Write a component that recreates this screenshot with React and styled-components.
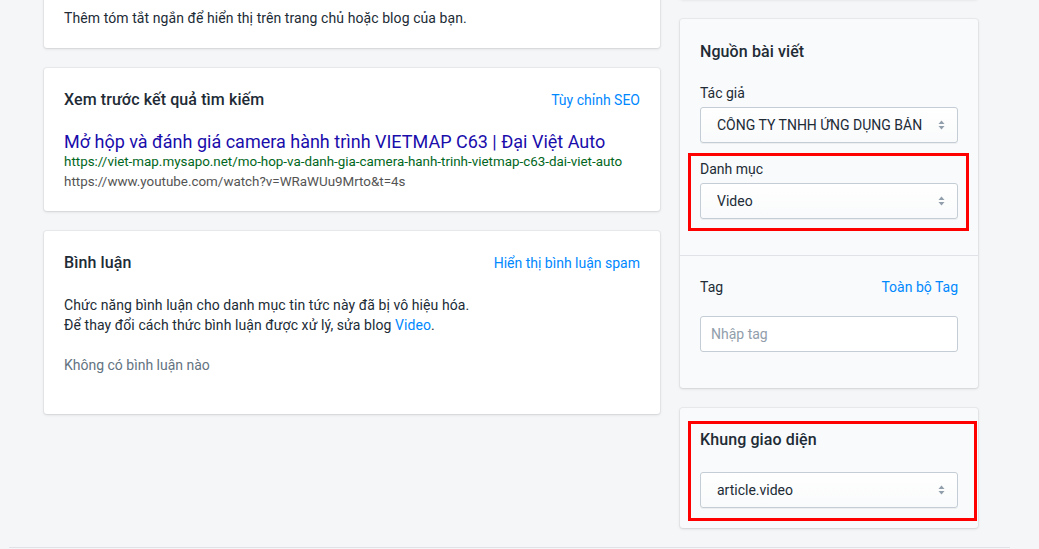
import React from "react";
import styled, { createGlobalStyle } from "styled-components";

const Global = createGlobalStyle`
  html, body { margin: 0; padding: 0; }
  body {
    background: #f4f6f8;
    font-family: Roboto, "Noto Sans", Arial, sans-serif;
    font-size: 14px;
    line-height: 20px;
    color: #212b36;
    overflow: hidden;
  }
  * { box-sizing: border-box; }
`;

const Page = styled.div`
  width: 1039px;
  height: 549px;
  overflow: hidden;
  display: flex;
  flex-direction: column;
`;

const Layout = styled.div`
  display: flex;
  align-items: flex-start;
  gap: 20px;
  margin-top: -20px;
  padding-left: 44px;
`;

const Column = styled.div`
  width: ${(p) => p.$width}px;
  display: flex;
  flex-direction: column;
  gap: 20px;
`;

const Card = styled.div`
  position: relative;
  background: ${(p) => (p.$tinted ? "#f9fafb" : "#ffffff")};
  border-radius: 3px;
  box-shadow: 0 0 0 1px rgba(63, 63, 68, 0.05), 0 1px 3px 0 rgba(63, 63, 68, 0.15);
  ${(p) => (p.$height ? `height: ${p.$height}px;` : "")}
`;

const Section = styled.div`
  padding: ${(p) => p.$pad || "20px"};
  & + & { border-top: 1px solid #dfe3e8; }
`;

const Header = styled.div`
  display: flex;
  justify-content: space-between;
  align-items: center;
  margin-bottom: ${(p) => (p.$mb != null ? p.$mb : 20)}px;
`;

const Title = styled.h2`
  margin: 0;
  font-size: 16px;
  line-height: 24px;
  font-weight: 500;
  letter-spacing: 0.1px;
  color: #212b36;
`;

const Link = styled.a`
  color: #0088ff;
  text-decoration: none;
  font-size: 14px;
  line-height: 20px;
  cursor: pointer;
`;

const Text = styled.p`
  margin: 0;
  color: ${(p) => p.$color || "#212b36"};
  font-size: 14px;
  line-height: 20px;
  letter-spacing: 0.08px;
`;

const SerpTitle = styled.a`
  display: block;
  color: #1a0dab;
  font-size: 18px;
  line-height: 20px;
  text-decoration: none;
`;

const SerpUrl = styled.div`
  color: ${(p) => p.$color};
  font-size: 13.4px;
  line-height: 20px;
`;

const Empty = styled.p`
  margin: 20px 0 19px;
  color: #637381;
  font-size: 14px;
  line-height: 20px;
`;

const FormGroup = styled.div`
  position: relative;
  margin-bottom: 16px;
`;

const Label = styled.label`
  display: block;
  font-size: 14px;
  line-height: 20px;
  color: #212b36;
  margin-bottom: 4px;
`;

const SelectWrap = styled.div`
  position: relative;
`;

const Select = styled.select`
  appearance: none;
  -webkit-appearance: none;
  display: block;
  width: 100%;
  height: 36px;
  padding: 0 32px 0 16px;
  font-family: inherit;
  font-size: 14px;
  color: #212b36;
  border: 1px solid #c4cdd5;
  border-radius: 3px;
  background: linear-gradient(180deg, #ffffff, #f9fafb);
  box-shadow: 0 1px 0 0 rgba(22, 29, 37, 0.05);
  outline: none;
`;

const Arrows = styled.svg`
  position: absolute;
  right: 12px;
  top: 50%;
  transform: translateY(-50%);
  pointer-events: none;
`;

const Input = styled.input`
  display: block;
  width: 100%;
  height: 36px;
  padding: 0 10px;
  font-family: inherit;
  font-size: 14px;
  color: #212b36;
  background: #ffffff;
  border: 1px solid #c4cdd5;
  border-radius: 3px;
  outline: none;
  &::placeholder { color: #919eab; }
`;

const Highlight = styled.div`
  position: absolute;
  top: ${(p) => p.$t}px;
  left: ${(p) => p.$l}px;
  right: ${(p) => p.$r}px;
  bottom: ${(p) => p.$b}px;
  border: 3px solid #ff0000;
  pointer-events: none;
`;

const Footer = styled.div`
  margin: auto 29px 1px 9px;
  border-top: 1px solid #dfe3e8;
`;

const SelectField = ({ value }) => (
  <SelectWrap>
    <Select defaultValue={value}>
      <option value={value}>{value}</option>
    </Select>
    <Arrows width="9" height="12" viewBox="0 0 9 12">
      <path d="M4.5 1.5 L7.5 5 H1.5 Z" fill="#919eab" />
      <path d="M4.5 10.5 L7.5 7 H1.5 Z" fill="#919eab" />
    </Arrows>
  </SelectWrap>
);

export default function App() {
  return (
    <Page>
      <Global />
      <Layout>
        <Column $width={616}>
          <Card>
            <Section $pad="28px 20px 20px">
              <Text>Thêm tóm tắt ngắn để hiển thị trên trang chủ hoặc blog của bạn.</Text>
            </Section>
          </Card>
          <Card>
            <Section $pad="20px 20px 19px">
              <Header $mb={20}>
                <Title>Xem trước kết quả tìm kiếm</Title>
                <Link>Tùy chỉnh SEO</Link>
              </Header>
              <SerpTitle>Mở hộp và đánh giá camera hành trình VIETMAP C63 | Đại Việt Auto</SerpTitle>
              <SerpUrl $color="#006621">https://viet-map.mysapo.net/mo-hop-va-danh-gia-camera-hanh-trinh-vietmap-c63-dai-viet-auto</SerpUrl>
              <SerpUrl $color="#545454">https://www.youtube.com/watch?v=WRaWUu9Mrto&amp;t=4s</SerpUrl>
            </Section>
          </Card>
          <Card>
            <Section>
              <Header $mb={20}>
                <Title>Bình luận</Title>
                <Link>Hiển thị bình luận spam</Link>
              </Header>
              <Text>Chức năng bình luận cho danh mục tin tức này đã bị vô hiệu hóa.</Text>
              <Text>
                Để thay đổi cách thức bình luận được xử lý, sửa blog <Link>Video</Link>.
              </Text>
              <Empty>Không có bình luận nào</Empty>
            </Section>
          </Card>
        </Column>
        <Column $width={298}>
          <Card $tinted $height={19} />
          <Card $tinted>
            <Section $pad="21px 20px 20px">
              <Header $mb={19}>
                <Title>Nguồn bài viết</Title>
              </Header>
              <FormGroup>
                <Label>Tác giả</Label>
                <SelectField value="CÔNG TY TNHH ỨNG DỤNG BẢN ĐỒ VIỆT NAM" />
              </FormGroup>
              <FormGroup>
                <Label>Danh mục</Label>
                <SelectField value="Video" />
                <Highlight $t={-6} $l={-12} $r={-11} $b={-12} />
              </FormGroup>
            </Section>
            <Section $pad="21px 20px 20px">
              <Header $mb={19}>
                <Text>Tag</Text>
                <Link>Toàn bộ Tag</Link>
              </Header>
              <FormGroup>
                <Input placeholder="Nhập tag" />
              </FormGroup>
            </Section>
          </Card>
          <Card $tinted>
            <Section>
              <Header $mb={20}>
                <Title>Khung giao diện</Title>
              </Header>
              <SelectField value="article.video" />
            </Section>
            <Highlight $t={13} $l={8} $r={1} $b={7} />
          </Card>
        </Column>
      </Layout>
      <Footer />
    </Page>
  );
}
